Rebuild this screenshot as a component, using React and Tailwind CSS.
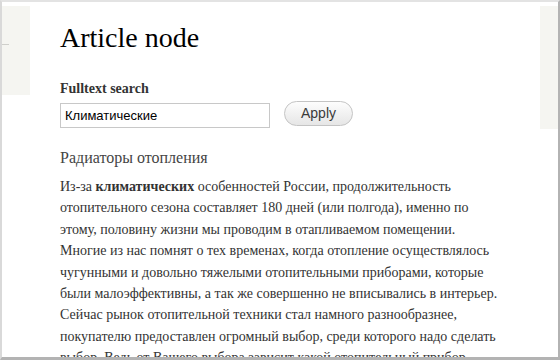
export default function App() {
  return (
    <div
      className="w-[560px] h-[360px] overflow-hidden bg-white border-t-2 border-t-[#e3e3e3] border-l-2 border-l-[#d9d9d9] border-r-2 border-r-[#b3b3b3] border-b-[3px] border-b-[#b3b3b3] flex items-start"
      style={{ fontFamily: '"Liberation Serif", serif' }}
    >
      <div className="w-[28px] h-[89px] mt-[4px] bg-[#f5f5f1] shrink-0 pt-[38px]">
        <div className="w-[7px] h-px bg-[#cfcfcb]" />
      </div>
      <div className="flex-1 pl-[30px] pt-[20px]">
        <h1 className="text-[28px] leading-[32px] text-black">Article node</h1>
        <div className="mt-[25px] text-[14px] leading-[20px] font-bold text-[#333]">Fulltext search</div>
        <div className="flex items-start mt-[2px]">
          <input
            className="mt-[2px] w-[210px] h-[25px] border border-[#c8c8c8] px-[4px] text-[13px] text-black outline-none"
            style={{ fontFamily: '"Liberation Sans", Arial, sans-serif' }}
            defaultValue="Климатические"
          />
          <button
            className="ml-[14px] w-[69px] h-[25px] rounded-full border border-[#c4c4c4] bg-gradient-to-b from-[#fdfdfd] to-[#e6e6e6] text-[14px] text-[#3a3a3a]"
            style={{ fontFamily: '"Liberation Sans", Arial, sans-serif' }}
          >
            Apply
          </button>
        </div>
        <h2 className="mt-[19px] text-[16px] leading-[22px] text-[#444]">Радиаторы отопления</h2>
        <p className="mt-[7px] w-[441px] text-[14px] leading-[21.4px] text-[#333]">
          Из-за <b>климатических</b> особенностей России, продолжительность отопительного сезона составляет 180 дней (или полгода), именно по этому, половину жизни мы проводим в отапливаемом помещении. Многие из нас помнят о тех временах, когда отопление осуществлялось чугунными и довольно тяжелыми отопительными приборами, которые были малоэффективны, а так же совершенно не вписывались в интерьер. Сейчас рынок отопительной техники стал намного разнообразнее, покупателю предоставлен огромный выбор, среди которого надо сделать выбор. Ведь от Вашего выбора зависит какой отопительный прибор будет установлен в Вашем доме.
        </p>
      </div>
      <div className="w-[18px] h-[123px] mt-[4px] bg-[#f5f5f1] shrink-0" />
    </div>
  );
}
